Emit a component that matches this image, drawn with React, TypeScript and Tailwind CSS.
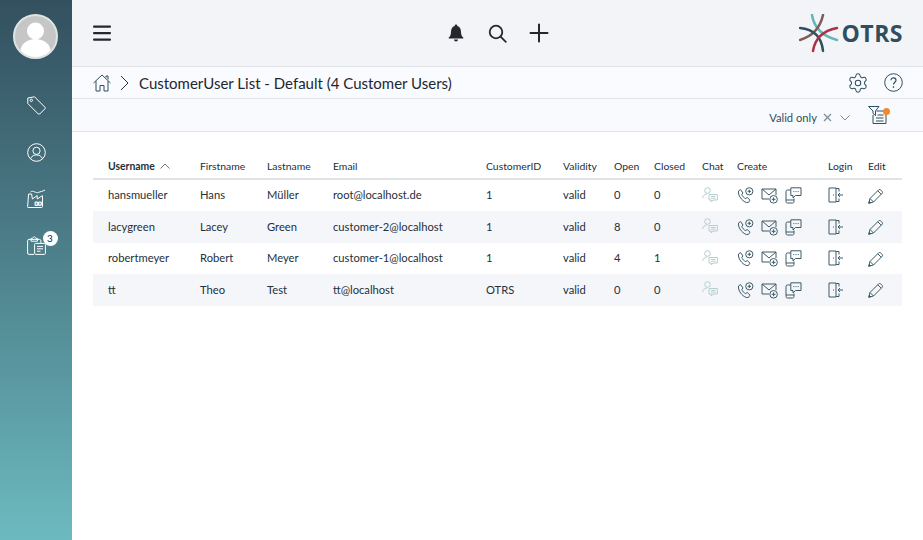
import { Settings } from 'lucide-react';

const rows = [
  { user: 'hansmueller', first: 'Hans', last: 'Müller', email: 'root@localhost.de', id: '1', open: '0', closed: '0', h: 'h-8' },
  { user: 'lacygreen', first: 'Lacey', last: 'Green', email: 'customer-2@localhost', id: '1', open: '8', closed: '0', h: 'h-8' },
  { user: 'robertmeyer', first: 'Robert', last: 'Meyer', email: 'customer-1@localhost', id: '1', open: '4', closed: '1', h: 'h-[31px]' },
  { user: 'tt', first: 'Theo', last: 'Test', email: 'tt@localhost', id: 'OTRS', open: '0', closed: '0', h: 'h-8' },
];

const headers = [
  ['Firstname', 'w-[67px]'],
  ['Lastname', 'w-[66px]'],
  ['Email', 'w-[153px]'],
  ['CustomerID', 'w-[77px]'],
  ['Validity', 'w-[51px]'],
  ['Open', 'w-[40px]'],
  ['Closed', 'w-[48px]'],
  ['Chat', 'w-[35px]'],
  ['Create', 'w-[91px]'],
  ['Login', 'w-[40px]'],
  ['Edit', 'w-[34px]'],
];

function TagIcon() {
  return (
    <svg width="19" height="19" viewBox="0 0 19 19" fill="none" stroke="#fff" strokeWidth="1" strokeLinejoin="round">
      <path d="M0.8 2 L7.5 0.8 L18 11.3 a1 1 0 0 1 0 1.4 L12.7 18 a1 1 0 0 1 -1.4 0 L0.8 7.5 Z" />
      <circle cx="4.3" cy="4.3" r="1.2" />
    </svg>
  );
}

function UserCircleIcon() {
  return (
    <svg width="19" height="19" viewBox="0 0 19 19" fill="none" stroke="#fff" strokeWidth="1">
      <circle cx="9.5" cy="9.5" r="8.8" />
      <circle cx="9.5" cy="7.8" r="3.6" />
      <path d="M3.6 15.6 C4.8 12.8 7 12 9.5 12 S14.2 12.8 15.4 15.6" />
    </svg>
  );
}

function FactoryIcon() {
  return (
    <svg width="19" height="19" viewBox="0 0 19 19" fill="none" stroke="#fff" strokeWidth="1" strokeLinejoin="round">
      <path d="M1.2 18.5 A0.7 0.7 0 0 1 0.6 17.7 L1.6 5 H4.6 L5.4 10 L10.2 6.6 V10 L15.5 6.6 V17.5 A1 1 0 0 1 14.5 18.5 Z" />
      <path d="M3.5 3 C6.5 0.8 8.5 4.6 11.5 3.4 C13.5 2.6 15.5 2.4 18 1" />
      <path d="M8 13 h2.7 v3.4 h-2.7 z M11.6 13 h2.7 v3.4 h-2.7 z" fill="#fff" fillOpacity="0.35" />
    </svg>
  );
}

function ClipboardIcon() {
  return (
    <svg width="19" height="19" viewBox="0 0 19 19" fill="none" stroke="#fff" strokeWidth="1" strokeLinejoin="round">
      <path d="M7 18.4 H2 A1.4 1.4 0 0 1 0.6 17 V4.8 A1.4 1.4 0 0 1 2 3.4 H12.5 A1.4 1.4 0 0 1 13.9 4.8 V7" />
      <path d="M4 5.2 V2.4 H5.6 C5.9 0.4 8.6 0.4 8.9 2.4 H10.5 V5.2 Z" />
      <rect x="7.6" y="7.4" width="10.8" height="11" rx="1" />
      <path d="M10 10.4 h6 M10 12.8 h6 M10 15.2 h3.5" />
    </svg>
  );
}

function Hamburger() {
  return (
    <svg width="18" height="16" viewBox="0 0 18 16" fill="#24272b">
      <rect x="0" y="0.5" width="18" height="2.2" rx="1" />
      <rect x="0" y="7" width="18" height="2.2" rx="1" />
      <rect x="0" y="13.5" width="18" height="2.2" rx="1" />
    </svg>
  );
}

function Logo() {
  return (
    <svg width="40" height="39" viewBox="0 0 40 39" fill="none" strokeWidth="2.5" strokeLinecap="round">
      <path d="M13 1 Q16 20 38 26" stroke="#63b5ba" />
      <path d="M24 1 Q20 20 1 26" stroke="#7d5d56" />
      <path d="M1 14 Q22 16 24 37" stroke="#2f4f5e" />
      <path d="M14 37 Q17 18 38 14" stroke="#a93346" />
    </svg>
  );
}

function PhoneIcon() {
  return (
    <svg width="17" height="17" viewBox="0 0 17 17" fill="none" stroke="#3d5a68" strokeWidth="1" strokeLinejoin="round">
      <path d="M1.5 4 L3.5 2.5 L6 6 L4.8 7.3 C5.2 9 7 11 8.8 11.6 L10.2 10.4 L13 13.2 L11.3 15.5 C7 16.5 0.5 9 1.5 4 Z" />
      <circle cx="12.3" cy="4.3" r="3.6" />
      <path d="M12.3 2.6 v3.4 M10.6 4.3 h3.4" />
    </svg>
  );
}

function MailIcon() {
  return (
    <svg width="17" height="17" viewBox="0 0 17 17" fill="none" stroke="#3d5a68" strokeWidth="1" strokeLinejoin="round">
      <path d="M8 12 H1 V2 H15 V8" />
      <path d="M1 2 L8 8 L15 2" />
      <circle cx="12.6" cy="12.3" r="3.8" />
      <path d="M12.6 10.4 v3.8 M10.7 12.3 h3.8" />
    </svg>
  );
}

function MobileChatIcon() {
  return (
    <svg width="17" height="17" viewBox="0 0 17 17" fill="none" stroke="#3d5a68" strokeWidth="1" strokeLinejoin="round">
      <path d="M5.5 3 H2.5 A1.5 1.5 0 0 0 1 4.5 V14.5 A1.5 1.5 0 0 0 2.5 16 H7.5 A1.5 1.5 0 0 0 9 14.5 V11.5" />
      <path d="M1 13 H9" />
      <path d="M5.8 0.8 H16 V8.5 H10.5 L8 11 V8.5 H5.8 Z" />
      <path d="M8.3 4.6 h1 M10.5 4.6 h1 M12.7 4.6 h1" />
    </svg>
  );
}

function LoginIcon() {
  return (
    <svg width="16" height="17" viewBox="0 0 16 17" fill="none" stroke="#3d5a68" strokeWidth="1" strokeLinejoin="round">
      <path d="M8 1 H1 V15 H8 Z" />
      <path d="M8 1.5 H11 V4.5 M8 14.5 H11 V11.5" />
      <path d="M5 8 h1" />
      <path d="M15 8 H10 M12 6 L10 8 L12 10" />
    </svg>
  );
}

function PencilIcon() {
  return (
    <svg width="16" height="16" viewBox="0 0 16 16" fill="none" stroke="#3d5a68" strokeWidth="1" strokeLinejoin="round">
      <path d="M0.8 15.2 L2 10.5 L10.8 1.7 C12 0.5 15.5 4 14.3 5.2 L5.5 14 Z" />
      <path d="M2 10.5 L5.5 14 M9.8 2.8 L13.2 6.2" />
      <path d="M0.8 15.2 L1.3 13.3 L2.7 14.7 Z" fill="#3d5a68" />
    </svg>
  );
}

function ChatUserIcon() {
  return (
    <svg width="16" height="16" viewBox="0 0 16 16" fill="none" stroke="#b5cece" strokeWidth="1" strokeLinejoin="round">
      <circle cx="5.5" cy="3.5" r="2.8" />
      <path d="M0.6 11 C1 8.5 2.8 7.2 5 7" />
      <path d="M7 7.5 H15.3 V13 H11 L9.3 15 V13 H7 Z" />
      <path d="M9 9.5 h4.4 M9 11.2 h4.4" />
    </svg>
  );
}

function Row({ row }: { row: (typeof rows)[number] }) {
  return (
    <tr className={`${row.h} even:bg-[#f5f6fa]`}>
      <td className="pl-[15px]">{row.user}</td>
      <td>{row.first}</td>
      <td>{row.last}</td>
      <td>{row.email}</td>
      <td>{row.id}</td>
      <td>valid</td>
      <td>{row.open}</td>
      <td>{row.closed}</td>
      <td>
        <div className="flex -translate-y-[1px]"><ChatUserIcon /></div>
      </td>
      <td>
        <div className="flex gap-[7px]">
          <PhoneIcon />
          <MailIcon />
          <MobileChatIcon />
        </div>
      </td>
      <td>
        <div className="flex"><LoginIcon /></div>
      </td>
      <td>
        <div className="flex"><PencilIcon /></div>
      </td>
    </tr>
  );
}

export default function App() {
  return (
    <div className="flex h-[540px] w-[923px] overflow-hidden bg-white font-['Lato',sans-serif] text-[#24303a]">
      <aside className="flex w-[72px] shrink-0 flex-col items-center bg-gradient-to-b from-[#33505f] to-[#6cbabf] pt-[14px]">
        <div className="mr-[1px] flex h-[45px] w-[45px] items-center justify-center overflow-hidden rounded-full border-2 border-[#dfe3e4] bg-[#c6c6c6]">
          <svg width="41" height="41" viewBox="0 0 41 41" fill="#fff">
            <circle cx="20.5" cy="15" r="8.5" />
            <ellipse cx="20.5" cy="35" rx="15" ry="12" />
          </svg>
        </div>
        <div className="mt-[37px] flex flex-col items-center gap-[27.5px]">
          <TagIcon />
          <UserCircleIcon />
          <FactoryIcon />
          <div className="relative">
            <ClipboardIcon />
            <span className="absolute -right-[12px] -top-[5px] flex h-[15px] w-[15px] items-center justify-center rounded-full bg-white text-[10px] text-[#1d2730]">3</span>
          </div>
        </div>
      </aside>

      <main className="flex min-w-0 flex-1 flex-col">
        <header className="flex h-[67px] items-center border-b border-[#e2e3e6] bg-[#f3f4f8] pl-[21px] pr-[20px]">
          <Hamburger />
          <div className="ml-[336px] flex items-center gap-[22px]">
            <svg className="mr-[1px]" width="18" height="18" viewBox="0 0 18 18" fill="#24272b">
              <path d="M9 0.5 a1.3 1.3 0 0 1 1.3 1.4 C13 2.6 14 5 14 8 C14 11 15 12.5 16.3 13.5 V14.5 H1.7 V13.5 C3 12.5 4 11 4 8 C4 5 5 2.6 7.7 1.9 A1.3 1.3 0 0 1 9 0.5 Z" />
              <path d="M7 15.5 h4 a2 2 0 0 1 -4 0 Z" />
            </svg>
            <svg width="19" height="19" viewBox="0 0 19 19" fill="none" stroke="#24272b" strokeWidth="1.8" strokeLinecap="round">
              <circle cx="8" cy="8" r="6.3" />
              <path d="M12.8 12.8 L17.8 17.8" />
            </svg>
            <svg width="20" height="20" viewBox="0 0 20 20" fill="none" stroke="#24272b" strokeWidth="2" strokeLinecap="round">
              <path d="M10 1.5 V18.5 M1.5 10 H18.5" />
            </svg>
          </div>
          <div className="ml-auto flex items-center gap-[3px]">
            <Logo />
            <span className="font-['Open_Sans',sans-serif] text-[23px] font-bold tracking-[0.5px] text-[#2f4f5e]">OTRS</span>
          </div>
        </header>

        <div className="flex h-[32px] items-center border-b border-[#e2e3e6] bg-[#fafbfe] pl-[21px] pr-[20px]">
          <svg width="18" height="18" viewBox="0 0 18 18" fill="none" stroke="#2f4f5e" strokeWidth="1" strokeLinejoin="round">
            <path d="M0.5 9 L9 1 L17.5 9" />
            <path d="M3 7 V17 H7 V11.5 H11 V17 H15 V7" />
            <path d="M13 3.5 V2 H15 V5.5" />
          </svg>
          <svg className="ml-[9px]" width="9" height="16" viewBox="0 0 9 16" fill="none" stroke="#24303a" strokeWidth="1">
            <path d="M1 1 L8 8 L1 15" />
          </svg>
          <h1 className="ml-[10px] pt-[1px] text-[15px] font-normal text-[#1d2730]">CustomerUser List - Default (4 Customer Users)</h1>
          <div className="ml-auto flex items-center gap-[15px]">
            <Settings size={22} color="#2f4f5e" strokeWidth={1.1} />
            <svg width="19" height="19" viewBox="0 0 19 19" fill="none" stroke="#2f4f5e" strokeWidth="1">
              <circle cx="9.5" cy="9.5" r="8.8" />
              <path d="M7 7.2 C7 4 12 4 12 7.2 C12 9.2 9.5 9.2 9.5 11.5" strokeWidth="1.2" />
              <circle cx="9.5" cy="14" r="0.5" />
            </svg>
          </div>
        </div>

        <div className="flex h-[33px] items-center justify-end border-b border-[#e2e3e6] bg-[#f9fafd] pr-[33px]">
          <div className="mt-[6px] flex items-center">
            <span className="text-[11.2px] text-[#2f4f5e]">Valid only</span>
            <svg className="ml-[6px]" width="9" height="9" viewBox="0 0 9 9" stroke="#7d8b93" strokeWidth="1.2">
              <path d="M1 1 L8 8 M8 1 L1 8" />
            </svg>
            <svg className="ml-[8px]" width="10" height="6" viewBox="0 0 10 6" fill="none" stroke="#7d8b93" strokeWidth="1">
              <path d="M0.5 0.5 L5 5 L9.5 0.5" />
            </svg>
          </div>
          <div className="relative ml-[18px] -mt-[1px]">
            <svg className="block" width="22" height="18" viewBox="0 0 22 18" fill="none" stroke="#2f4f5e" strokeWidth="1" strokeLinejoin="round">
              <path d="M0.5 0.5 H11 L7.5 5 V9.5 L5 7.5 V5 Z" />
              <path d="M8.5 5 H18 V17.5 H5 V9 M9.5 9 H15.5 M8 12 H15.5 M8 15 H15.5" />
            </svg>
            <span className="absolute right-0 top-[2px] h-[7px] w-[7px] rounded-full bg-[#ef8a2a]" />
          </div>
        </div>

        <div className="px-[21px] pt-[23px]">
          <table className="w-[809px] table-fixed border-collapse text-left text-[11.2px] text-[#24303a]">
            <thead>
              <tr className="h-[24px] border-b-2 border-[#e2e3e6] text-[10.4px]">
                <th className="w-[107px] pl-[15px] font-bold">
                  <span className="inline-flex items-center gap-[5px]">
                    Username
                    <svg width="10" height="6" viewBox="0 0 10 6" fill="none" stroke="#5a6a74" strokeWidth="0.9">
                      <path d="M0.5 5.5 L5 1 L9.5 5.5" />
                    </svg>
                  </span>
                </th>
                {headers.map(([label, width]) => (
                  <th key={label} className={`${width} font-normal`}>{label}</th>
                ))}
              </tr>
            </thead>
            <tbody>
              {rows.map((row) => (
                <Row key={row.user} row={row} />
              ))}
            </tbody>
          </table>
        </div>
      </main>
    </div>
  );
}
